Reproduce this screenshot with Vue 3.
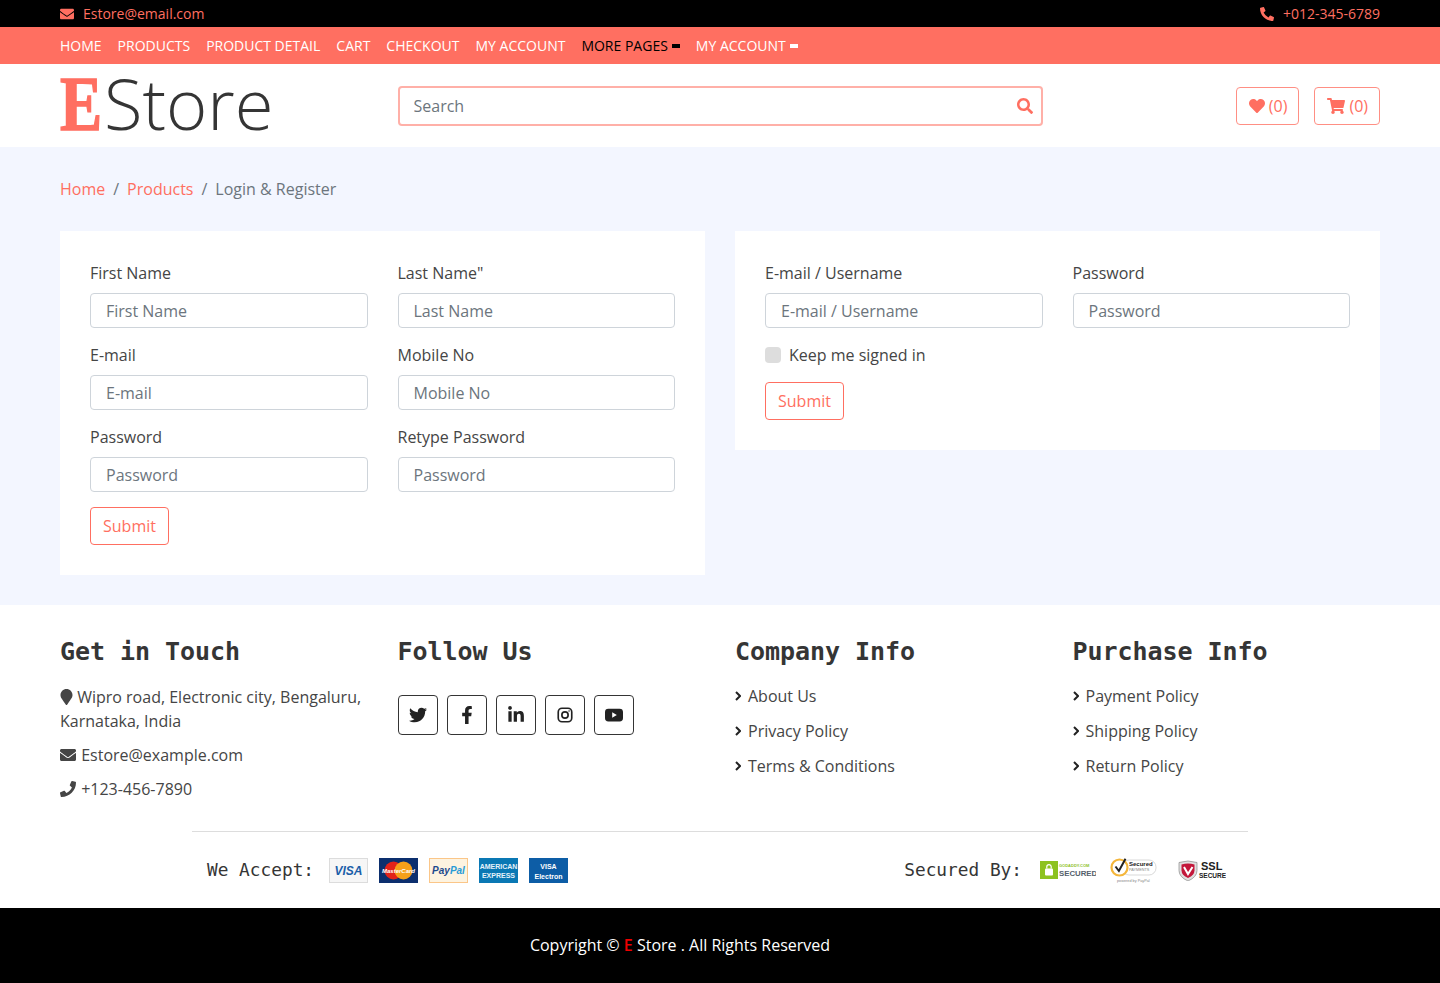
<template>
  <div class="page">
    <div class="top-bar">
      <span class="top-item">
        <svg class="ico top-ico" :viewBox="icons.envelope.box"><path :d="icons.envelope.d" /></svg>
        Estore@email.com
      </span>
      <span class="top-item">
        <svg class="ico top-ico" :viewBox="icons.phoneAlt.box"><path :d="icons.phoneAlt.d" /></svg>
        +012-345-6789
      </span>
    </div>

    <nav class="nav-bar">
      <a v-for="item in navItems" :key="item" href="#" class="nav-link">{{ item }}</a>
      <a href="#" class="nav-link active">MORE PAGES<i class="caret"></i></a>
      <a href="#" class="nav-link">MY ACCOUNT<i class="caret"></i></a>
    </nav>

    <header class="main-header">
      <div class="logo"><b><span>E</span></b><span>Store</span></div>
      <div class="search">
        <input type="text" placeholder="Search" />
        <svg class="ico search-ico" :viewBox="icons.search.box"><path :d="icons.search.d" /></svg>
      </div>
      <div class="user-btns">
        <a href="#" class="count-btn">
          <svg class="ico" :viewBox="icons.heart.box"><path :d="icons.heart.d" /></svg>
          <span>(0)</span>
        </a>
        <a href="#" class="count-btn">
          <svg class="ico cart" :viewBox="icons.cart.box"><path :d="icons.cart.d" /></svg>
          <span>(0)</span>
        </a>
      </div>
    </header>

    <main class="content">
      <ul class="breadcrumb">
        <li><a href="#">Home</a></li>
        <li><a href="#">Products</a></li>
        <li>Login &amp; Register</li>
      </ul>

      <div class="forms">
        <form class="card" @submit.prevent>
          <div class="fields">
            <div v-for="f in registerFields" :key="f.label" class="field">
              <label>{{ f.label }}</label>
              <input type="text" :placeholder="f.placeholder" />
            </div>
          </div>
          <button class="submit">Submit</button>
        </form>

        <form class="card login" @submit.prevent>
          <div class="fields">
            <div class="field">
              <label>E-mail / Username</label>
              <input type="text" placeholder="E-mail / Username" />
            </div>
            <div class="field">
              <label>Password</label>
              <input type="text" placeholder="Password" />
            </div>
          </div>
          <div class="keep"><i class="check"></i>Keep me signed in</div>
          <button class="submit">Submit</button>
        </form>
      </div>
    </main>

    <footer class="footer">
      <div class="footer-cols">
        <div>
          <h2>Get in Touch</h2>
          <p>
            <svg class="ico marker" :viewBox="icons.marker.box"><path :d="icons.marker.d" /></svg>
            Wipro road, Electronic city, Bengaluru, Karnataka, India
          </p>
          <p>
            <svg class="ico contact-ico" :viewBox="icons.envelope.box"><path :d="icons.envelope.d" /></svg>
            Estore@example.com
          </p>
          <p>
            <svg class="ico contact-ico" :viewBox="icons.phone.box"><path :d="icons.phone.d" /></svg>
            +123-456-7890
          </p>
        </div>
        <div>
          <h2>Follow Us</h2>
          <div class="socials">
            <a href="#" class="social">
              <svg class="ico" :viewBox="icons.twitter.box"><path :d="icons.twitter.d" /></svg>
            </a>
            <a href="#" class="social">
              <svg class="ico" :viewBox="icons.facebook.box"><path :d="icons.facebook.d" /></svg>
            </a>
            <a href="#" class="social">
              <svg class="ico" :viewBox="icons.linkedin.box"><path :d="icons.linkedin.d" /></svg>
            </a>
            <a href="#" class="social">
              <svg viewBox="0 0 24 24" fill="none" stroke="#222" stroke-width="2.2">
                <rect x="3" y="3" width="18" height="18" rx="5" />
                <circle cx="12" cy="12" r="4.2" />
                <circle cx="17.4" cy="6.6" r="1" fill="#222" stroke="none" />
              </svg>
            </a>
            <a href="#" class="social">
              <svg viewBox="0 0 24 24">
                <rect y="3.5" width="24" height="17" rx="4.5" fill="#222" />
                <path d="M9.6 8.4v7.2l6.2-3.6z" fill="#fff" />
              </svg>
            </a>
          </div>
        </div>
        <div v-for="col in linkCols" :key="col.title">
          <h2>{{ col.title }}</h2>
          <div class="foot-links">
            <a v-for="link in col.links" :key="link" href="#" class="foot-link">
              <svg class="chevron" viewBox="0 0 6 10"><path d="M1 1l4 4-4 4" /></svg>
              {{ link }}
            </a>
          </div>
        </div>
      </div>

      <div class="payments">
        <div class="pay-group">
          <span class="pay-label">We Accept:</span>
          <svg class="pay-card" viewBox="0 0 39 25">
            <rect x=".5" y=".5" width="38" height="24" fill="#f6f6f6" stroke="#dcdcdc" />
            <text x="19.5" y="17" text-anchor="middle" class="t-visa">VISA</text>
          </svg>
          <svg class="pay-card" viewBox="0 0 39 25">
            <rect width="39" height="25" fill="#0c2f6e" />
            <circle cx="14.5" cy="12.5" r="9" fill="#e2231a" />
            <circle cx="24.5" cy="12.5" r="9" fill="#f6a01a" />
            <text x="19.5" y="14.5" text-anchor="middle" class="t-mc">MasterCard</text>
          </svg>
          <svg class="pay-card" viewBox="0 0 39 25">
            <rect x=".5" y=".5" width="38" height="24" fill="#fdf3e0" stroke="#fbc688" />
            <text x="19.5" y="16" text-anchor="middle" class="t-pp"><tspan fill="#1d4a8d">Pay</tspan><tspan fill="#2a9bd6">Pal</tspan></text>
          </svg>
          <svg class="pay-card" viewBox="0 0 39 25">
            <rect width="39" height="25" fill="#0a78b4" />
            <text x="19.5" y="10.5" text-anchor="middle" class="t-ax">AMERICAN</text>
            <text x="19.5" y="19.5" text-anchor="middle" class="t-ax">EXPRESS</text>
          </svg>
          <svg class="pay-card" viewBox="0 0 39 25">
            <rect width="39" height="25" fill="#0d5da6" />
            <text x="19.5" y="10.5" text-anchor="middle" class="t-ve">VISA</text>
            <text x="19.5" y="20.5" text-anchor="middle" class="t-ve">Electron</text>
          </svg>
        </div>
        <div class="pay-group right">
          <span class="pay-label secured">Secured By:</span>
          <svg class="badge-godaddy" viewBox="0 0 56 20">
            <rect y="1" width="18" height="18" fill="#8dc21f" />
            <rect x="5" y="8.5" width="8" height="7" rx="1" fill="#fff" />
            <path d="M6.8 8.5V6.8a2.2 2.2 0 0 1 4.4 0v1.7" fill="none" stroke="#fff" stroke-width="1.2" />
            <text x="19" y="6.5" class="t-gd1">GODADDY.COM</text>
            <text x="19" y="15.5" class="t-gd2">SECURED</text>
          </svg>
          <svg class="badge-paypal" viewBox="0 0 48 26">
            <rect x="12" y="3" width="34" height="15" rx="7" fill="#fff" stroke="#cfcfcf" stroke-width=".8" />
            <circle cx="9.5" cy="10.5" r="8" fill="#fff" stroke="#f4b63b" stroke-width="2.2" />
            <path d="M5.5 9.5l3.4 4.5L15.5 1.8" fill="none" stroke="#222" stroke-width="2" />
            <text x="19" y="8.5" class="t-sec">Secured</text>
            <text x="19" y="14" class="t-pay">PAYMENTS</text>
            <text x="7" y="24.5" class="t-pay">powered by PayPal</text>
          </svg>
          <svg class="badge-ssl" viewBox="0 0 48 22">
            <path d="M1 3.5q9-3 18 0v8q0 6.5-9 10.5q-9-4-9-10.5z" fill="#e0e0e0" stroke="#8a8a8a" stroke-width=".7" />
            <path d="M3.5 5.5q6.5-2 13 0v6q0 4.5-6.5 7.5q-6.500-3-6.500-7.500z" fill="#c3173a" />
            <path d="M6 8l4 7 4.5-7" fill="none" stroke="#fff" stroke-width="2" />
            <text x="23" y="11" class="t-ssl">SSL</text>
            <text x="21" y="18.5" class="t-secure">SECURE</text>
          </svg>
        </div>
      </div>
    </footer>

    <div class="copyright">
      Copyright &copy; <a href="#">E</a> Store . All Rights Reserved
    </div>
  </div>
</template>

<script setup>
const icons = {
  envelope: {
    box: '0 0 512 512',
    d: 'M502.3 190.8c3.9-3.1 9.7-.2 9.7 4.7V400c0 26.5-21.5 48-48 48H48c-26.5 0-48-21.5-48-48V195.6c0-5 5.7-7.8 9.7-4.7 22.4 17.4 52.1 39.5 154.1 113.6 21.1 15.4 56.7 47.8 92.2 47.6 35.7.3 72-32.8 92.3-47.6 102-74.1 131.6-96.3 154-113.7zM256 320c23.2.4 56.6-29.2 73.4-41.4 132.7-96.3 142.8-104.7 173.4-128.7 5.8-4.5 9.2-11.5 9.2-18.9v-19c0-26.5-21.5-48-48-48H48C21.5 64 0 85.5 0 112v19c0 7.4 3.4 14.3 9.2 18.9 30.6 23.9 40.7 32.4 173.4 128.7 16.8 12.2 50.2 41.8 73.4 41.4z'
  },
  phoneAlt: {
    box: '0 0 512 512',
    d: 'M497.39 361.8l-112-48a24 24 0 0 0-28 6.9l-49.6 60.6A370.66 370.66 0 0 1 130.6 204.11l60.6-49.6a23.94 23.94 0 0 0 6.9-28l-48-112A24.16 24.16 0 0 0 122.6.61l-104 24A24 24 0 0 0 0 48c0 256.5 207.9 464 464 464a24 24 0 0 0 23.4-18.6l24-104a24.29 24.29 0 0 0-14.01-27.6z'
  },
  phone: {
    box: '0 0 512 512',
    d: 'M493.4 24.6l-104-24c-11.3-2.6-22.9 3.3-27.5 13.9l-48 112c-4.2 9.8-1.4 21.3 6.9 28l60.6 49.6c-36 76.7-98.9 140.5-177.2 177.2l-49.6-60.6c-6.8-8.3-18.2-11.1-28-6.9l-112 48C3.9 366.5-2 378.1.6 389.4l24 104C27.1 504.2 36.7 512 48 512c256.1 0 464-207.5 464-464 0-11.2-7.7-20.9-18.6-23.4z'
  },
  search: {
    box: '0 0 512 512',
    d: 'M505 442.7L405.3 343c-4.5-4.5-10.6-7-17-7H372c27.6-35.3 44-79.7 44-128C416 93.1 322.9 0 208 0S0 93.1 0 208s93.1 208 208 208c48.3 0 92.7-16.4 128-44v16.3c0 6.4 2.5 12.5 7 17l99.7 99.7c9.4 9.4 24.6 9.4 33.9 0l28.3-28.3c9.4-9.4 9.4-24.6.1-34zM208 336c-70.7 0-128-57.2-128-128 0-70.7 57.2-128 128-128 70.7 0 128 57.2 128 128 0 70.7-57.2 128-128 128z'
  },
  heart: {
    box: '0 0 512 512',
    d: 'M462.3 62.6C407.5 15.9 326 24.3 275.7 76.2L256 96.5l-19.7-20.3C186.1 24.3 104.5 15.9 49.7 62.6c-62.8 53.6-66.1 149.8-9.9 207.9l193.5 199.8c12.5 12.9 32.8 12.9 45.3 0l193.5-199.8c56.3-58.1 53-154.3-9.8-207.9z'
  },
  cart: {
    box: '0 0 576 512',
    d: 'M528.12 301.319l47.273-208C578.806 78.301 567.391 64 551.99 64H159.208l-9.166-44.81C147.758 8.021 137.93 0 126.529 0H24C10.745 0 0 10.745 0 24v16c0 13.255 10.745 24 24 24h69.883l70.248 343.435C147.325 417.1 136 435.222 136 456c0 30.928 25.072 56 56 56s56-25.072 56-56c0-15.674-6.447-29.835-16.824-40h209.647C430.447 426.165 424 440.326 424 456c0 30.928 25.072 56 56 56s56-25.072 56-56c0-22.172-12.888-41.332-31.579-50.405l5.517-24.276c3.413-15.018-8.002-29.319-23.403-29.319H218.117l-6.545-32h293.145c11.206 0 20.92-7.754 23.403-18.681z'
  },
  marker: {
    box: '0 0 384 512',
    d: 'M172.268 501.67C26.97 291.031 0 269.413 0 192 0 85.961 85.961 0 192 0s192 85.961 192 192c0 77.413-26.97 99.031-172.268 309.67-9.535 13.774-29.93 13.773-39.464 0z'
  },
  twitter: {
    box: '0 0 512 512',
    d: 'M459.37 151.716c.325 4.548.325 9.097.325 13.645 0 138.72-105.583 298.558-298.558 298.558-59.452 0-114.68-17.219-161.137-47.106 8.447.974 16.568 1.299 25.34 1.299 49.055 0 94.213-16.568 130.274-44.832-46.132-.975-84.792-31.188-98.112-72.772 6.498.974 12.995 1.624 19.818 1.624 9.421 0 18.843-1.3 27.614-3.573-48.081-9.747-84.143-51.98-84.143-102.985v-1.299c13.969 7.797 30.214 12.67 47.431 13.319-28.264-18.843-46.781-51.005-46.781-87.391 0-19.492 5.197-37.36 14.294-52.954 51.655 63.675 129.3 105.258 216.365 109.807-1.624-7.797-2.599-15.918-2.599-24.04 0-57.828 46.782-104.934 104.934-104.934 30.213 0 57.502 12.67 76.67 33.137 23.715-4.548 46.456-13.32 66.599-25.34-7.798 24.366-24.366 44.833-46.132 57.827 21.117-2.273 41.584-8.122 60.426-16.243-14.292 20.791-32.161 39.308-52.628 54.253z'
  },
  facebook: {
    box: '0 0 320 512',
    d: 'M279.14 288l14.22-92.66h-88.91v-60.13c0-25.35 12.42-50.06 52.24-50.06h40.42V6.26S260.43 0 225.36 0c-73.22 0-121.08 44.38-121.08 124.72v70.62H22.89V288h81.39v224h100.17V288z'
  },
  linkedin: {
    box: '0 0 448 512',
    d: 'M100.28 448H7.4V148.9h92.88zM53.79 108.1C24.09 108.1 0 83.5 0 53.8a53.79 53.79 0 0 1 107.58 0c0 29.7-24.1 54.3-53.79 54.3zM447.9 448h-92.68V302.4c0-34.7-.7-79.2-48.29-79.2-48.29 0-55.69 37.7-55.69 76.7V448h-92.78V148.9h89.08v40.8h1.3c12.4-23.5 42.69-48.3 87.88-48.3 94 0 111.28 61.9 111.28 142.3V448z'
  }
}

const navItems = ['HOME', 'PRODUCTS', 'PRODUCT DETAIL', 'CART', 'CHECKOUT', 'MY ACCOUNT']

const registerFields = [
  { label: 'First Name', placeholder: 'First Name' },
  { label: 'Last Name"', placeholder: 'Last Name' },
  { label: 'E-mail', placeholder: 'E-mail' },
  { label: 'Mobile No', placeholder: 'Mobile No' },
  { label: 'Password', placeholder: 'Password' },
  { label: 'Retype Password', placeholder: 'Password' }
]

const linkCols = [
  { title: 'Company Info', links: ['About Us', 'Privacy Policy', 'Terms & Conditions'] },
  { title: 'Purchase Info', links: ['Payment Policy', 'Shipping Policy', 'Return Policy'] }
]
</script>

<style>
body {
  margin: 0;
}
</style>

<style scoped>
.page {
  font-family: "Open Sans", sans-serif;
  font-size: 16px;
  line-height: 24px;
  color: #454545;
  background: #fff;
}

.page * {
  box-sizing: border-box;
}

a {
  text-decoration: none;
}

.ico {
  display: inline-block;
  fill: currentColor;
}

.top-bar {
  display: flex;
  justify-content: space-between;
  align-items: center;
  height: 27px;
  padding: 0 60px;
  background: #000;
  color: #ff6f61;
  font-size: 14px;
}

.top-item {
  display: flex;
  align-items: center;
  gap: 9px;
}

.top-ico {
  width: 14px;
  height: 14px;
}

.nav-bar {
  display: flex;
  align-items: center;
  gap: 16px;
  height: 37px;
  padding: 0 60px;
  background: #ff6f61;
}

.nav-link {
  display: flex;
  align-items: center;
  color: #fff;
  font-size: 14px;
}

.nav-link.active {
  color: #000;
}

.caret {
  width: 8px;
  height: 4px;
  margin-left: 4px;
  background: currentColor;
}

.main-header {
  display: grid;
  grid-template-columns: 307.5px 1fr 307.5px;
  column-gap: 30px;
  align-items: center;
  height: 83px;
  padding: 0 60px;
}

.logo {
  display: flex;
  align-items: baseline;
  height: 83px;
  line-height: 79px;
  color: #353535;
  font-size: 70.5px;
  font-weight: 300;
  white-space: nowrap;
}

.logo b {
  display: inline-block;
  width: 42px;
  margin-right: 2px;
  color: #ff6f61;
  font-family: "Liberation Serif", serif;
  font-size: 79px;
  font-weight: 700;
}

.logo b span {
  display: inline-block;
  transform: scaleX(0.8);
  transform-origin: left;
  -webkit-text-stroke: 1.5px #ff6f61;
}

.search {
  position: relative;
}

.search input {
  display: block;
  width: 100%;
  height: 40px;
  padding: 0 40px 0 14px;
  border: 2px solid rgba(255, 111, 97, 0.55);
  border-radius: 4px;
  outline: none;
  color: #495057;
  font: inherit;
}

.search-ico {
  position: absolute;
  top: 12px;
  right: 10px;
  width: 16px;
  height: 16px;
  color: #ff6f61;
}

input::placeholder {
  color: #6c757d;
  opacity: 1;
}

.user-btns {
  display: flex;
  justify-content: flex-end;
  gap: 15px;
}

.count-btn {
  display: flex;
  align-items: center;
  gap: 4px;
  height: 38px;
  padding: 0 11px 0 12px;
  border: 1px solid #ff8f84;
  border-radius: 4px;
  color: #ff6f61;
}

.count-btn svg {
  width: 16px;
  height: 16px;
}

.count-btn svg.cart {
  width: 18px;
}

.content {
  padding: 30px 60px;
  background: #f3f6ff;
}

.breadcrumb {
  display: flex;
  margin: 0 0 30px;
  padding: 0;
  list-style: none;
  color: #6c757d;
}

.breadcrumb li + li::before {
  content: "/";
  padding: 0 8px;
}

.breadcrumb a {
  color: #ff6f61;
}

.forms {
  display: grid;
  grid-template-columns: 1fr 1fr;
  column-gap: 30px;
  align-items: start;
}

.card {
  padding: 30px;
  background: #fff;
}

.fields {
  display: grid;
  grid-template-columns: 1fr 1fr;
  column-gap: 30px;
}

.field {
  margin-bottom: 15px;
}

.field label {
  display: block;
  margin-bottom: 8px;
}

.field input {
  display: block;
  width: 100%;
  height: 35px;
  padding: 0 15px;
  border: 1px solid #ced4da;
  border-radius: 4px;
  outline: none;
  background: #fff;
  color: #495057;
  font: inherit;
}

.keep {
  display: flex;
  align-items: center;
  margin-bottom: 15px;
}

.check {
  width: 16px;
  height: 16px;
  margin-right: 8px;
  border-radius: 4px;
  background: #ddd;
}

.submit {
  display: block;
  height: 38px;
  padding: 0 12px;
  border: 1px solid #ff6f61;
  border-radius: 4px;
  background: #fff;
  color: #ff6f61;
  font: inherit;
}

.footer {
  padding-top: 31px;
}

.footer-cols {
  display: grid;
  grid-template-columns: repeat(4, 1fr);
  column-gap: 30px;
  padding: 0 60px 20px;
}

.footer h2 {
  margin: 0 0 17px;
  color: #353535;
  font-family: "DejaVu Sans Mono", monospace;
  font-size: 25px;
  font-weight: 700;
  line-height: 32px;
  letter-spacing: -0.05px;
}

.footer p {
  margin: 0 0 10px;
}

.marker {
  width: 13px;
  height: 16px;
  vertical-align: -2px;
}

.contact-ico {
  width: 16px;
  height: 16px;
  margin-right: 1px;
  vertical-align: -2px;
}

.socials {
  display: flex;
  gap: 9px;
  margin-top: 27px;
}

.social {
  display: flex;
  align-items: center;
  justify-content: center;
  width: 40px;
  height: 40px;
  border: 1px solid #353535;
  border-radius: 4px;
  color: #222;
}

.social svg {
  width: 18px;
  height: 18px;
}

.foot-links {
  margin-top: -1px;
}

.foot-link {
  display: flex;
  align-items: center;
  gap: 7px;
  margin-bottom: 11px;
  color: #454545;
}

.chevron {
  width: 6px;
  height: 10px;
  fill: none;
  stroke: #222;
  stroke-width: 2;
}

.payments {
  display: flex;
  justify-content: space-between;
  align-items: center;
  height: 77px;
  margin: 0 192px;
  padding: 0 15px;
  border-top: 1px solid #ddd;
}

.pay-group {
  display: flex;
  align-items: center;
}

.pay-group.right {
  padding-right: 7px;
}

.pay-label {
  margin-right: 15px;
  color: #353535;
  font-family: "DejaVu Sans Mono", monospace;
  font-size: 17.8px;
}

.pay-card {
  display: block;
  width: 39px;
  height: 25px;
  margin-right: 11px;
}

.pay-card:last-child {
  margin-right: 0;
}

.secured {
  margin-right: 18px;
}

.badge-godaddy {
  width: 56px;
  height: 20px;
  margin-right: 14px;
}

.badge-paypal {
  width: 48px;
  height: 26px;
  margin-right: 20px;
}

.badge-ssl {
  width: 48px;
  height: 22px;
}

svg text {
  font-family: "Liberation Sans", sans-serif;
}

.t-visa {
  fill: #1a5ea8;
  font-size: 12px;
  font-weight: 700;
  font-style: italic;
}

.t-mc {
  fill: #fff;
  font-size: 6px;
  font-weight: 700;
  font-style: italic;
}

.t-pp {
  font-size: 10px;
  font-weight: 700;
  font-style: italic;
}

.t-ax {
  fill: #e6f2fa;
  font-size: 7px;
  font-weight: 700;
}

.t-ve {
  fill: #fff;
  font-size: 7px;
  font-weight: 700;
}

.t-gd1 {
  fill: #8dc21f;
  font-size: 4px;
  font-weight: 700;
}

.t-gd2 {
  fill: #54606b;
  font-size: 7.8px;
  font-weight: 700;
}

.t-sec {
  fill: #222;
  font-size: 6px;
  font-weight: 700;
}

.t-pay {
  fill: #888;
  font-size: 3.8px;
}

.t-ssl {
  fill: #222;
  font-size: 11px;
  font-weight: 700;
}

.t-secure {
  fill: #222;
  font-size: 6.5px;
  font-weight: 700;
}

.copyright {
  height: 75px;
  padding: 25px 80px 0 0;
  background: #000;
  color: #fff;
  text-align: center;
}

.copyright a {
  color: #e00;
  font-weight: 600;
}
</style>
